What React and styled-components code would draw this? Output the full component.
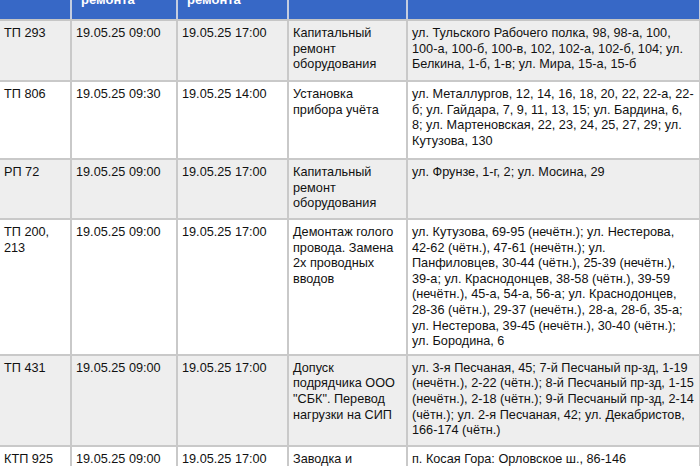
import styled, { createGlobalStyle } from "styled-components";

const GlobalStyle = createGlobalStyle`
  html, body {
    margin: 0;
    padding: 0;
    background: #ffffff;
  }
  body {
    font-family: "Liberation Sans", Arial, sans-serif;
    color: #111111;
  }
`;

const columns = [
  { title: "Объект", width: 71 },
  { title: "Дата и время начала ремонта", width: 106 },
  { title: "Дата и время окончания ремонта", width: 111 },
  { title: "Вид работ", width: 119 },
  { title: "Адреса", width: 293 },
];

// address lines are kept as they wrap in the published table
const rows = [
  {
    object: "ТП 293",
    start: "19.05.25 09:00",
    end: "19.05.25 17:00",
    work: "Капитальный ремонт оборудования",
    address: [
      "ул. Тульского Рабочего полка, 98, 98-а, 100,",
      "100-а, 100-б, 100-в, 102, 102-а, 102-б, 104; ул.",
      "Белкина, 1-б, 1-в; ул. Мира, 15-а, 15-б",
    ],
    height: 61,
  },
  {
    object: "ТП 806",
    start: "19.05.25 09:30",
    end: "19.05.25 14:00",
    work: "Установка прибора учёта",
    address: [
      "ул. Металлургов, 12, 14, 16, 18, 20, 22, 22-а, 22-",
      "б; ул. Гайдара, 7, 9, 11, 13, 15; ул. Бардина, 6,",
      "8; ул. Мартеновская, 22, 23, 24, 25, 27, 29; ул.",
      "Кутузова, 130",
    ],
    height: 78,
  },
  {
    object: "РП 72",
    start: "19.05.25 09:00",
    end: "19.05.25 17:00",
    work: "Капитальный ремонт оборудования",
    address: ["ул. Фрунзе, 1-г, 2; ул. Мосина, 29"],
    height: 60,
  },
  {
    object: "ТП 200, 213",
    start: "19.05.25 09:00",
    end: "19.05.25 17:00",
    work: "Демонтаж голого провода. Замена 2х проводных вводов",
    address: [
      "ул. Кутузова, 69-95 (нечётн.); ул. Нестерова,",
      "42-62 (чётн.), 47-61 (нечётн.); ул.",
      "Панфиловцев, 30-44 (чётн.), 25-39 (нечётн.),",
      "39-а; ул. Краснодонцев, 38-58 (чётн.), 39-59",
      "(нечётн.), 45-а, 54-а, 56-а; ул. Краснодонцев,",
      "28-36 (чётн.), 29-37 (нечётн.), 28-а, 28-б, 35-а;",
      "ул. Нестерова, 39-45 (нечётн.), 30-40 (чётн.);",
      "ул. Бородина, 6",
    ],
    height: 130,
  },
  {
    object: "ТП 431",
    start: "19.05.25 09:00",
    end: "19.05.25 17:00",
    work: 'Допуск подрядчика ООО "СБК". Перевод нагрузки на СИП',
    address: [
      "ул. 3-я Песчаная, 45; 7-й Песчаный пр-зд, 1-19",
      "(нечётн.), 2-22 (чётн.); 8-й Песчаный пр-зд, 1-15",
      "(нечётн.), 2-18 (чётн.); 9-й Песчаный пр-зд, 2-14",
      "(чётн.); ул. 2-я Песчаная, 42; ул. Декабристов,",
      "166-174 (чётн.)",
    ],
    height: 91,
  },
  {
    object: "КТП 925",
    start: "19.05.25 09:00",
    end: "19.05.25 17:00",
    work: "Заводка и подключение нового кабеля",
    address: ["п. Косая Гора: Орловское ш., 86-146"],
    height: 70,
  },
];

const Viewport = styled.div`
  width: 700px;
  height: 466px;
  overflow: hidden;
`;

const Table = styled.table`
  width: 700px;
  margin-top: -50px;
  border-collapse: collapse;
  table-layout: fixed;
  font-size: 12.7px;
  line-height: 15.6px;
`;

const HeadRow = styled.tr`
  height: 70px;
  background: #3768c6;
`;

const HeadCell = styled.th`
  padding: 0 6px 0 9px;
  vertical-align: middle;
  text-align: left;
  font-weight: bold;
  font-size: 13px;
  color: #ffffff;
  border-left: 2px solid #c4cde0;
  border-right: 2px solid #c4cde0;
  border-bottom: 2px solid #c6c6c6;

  &:first-child {
    border-left: none;
  }
`;

const Row = styled.tr`
  background: ${(props) => (props.$shaded ? "#eeeeee" : "#ffffff")};
`;

const Cell = styled.td`
  padding: 5px 4px 4px 4px;
  vertical-align: top;
  border: 2px solid #c9c9c9;
  border-top: none;
  overflow-wrap: break-word;

  &:first-child {
    border-left: none;
  }

  &:last-child {
    padding-right: 0;
  }
`;

const AddressLine = styled.span`
  display: block;
  white-space: nowrap;
`;

export default function App() {
  return (
    <Viewport>
      <GlobalStyle />
      <Table>
        <colgroup>
          {columns.map((col) => (
            <col key={col.title} style={{ width: col.width }} />
          ))}
        </colgroup>
        <thead>
          <HeadRow>
            {columns.map((col) => (
              <HeadCell key={col.title}>{col.title}</HeadCell>
            ))}
          </HeadRow>
        </thead>
        <tbody>
          {rows.map((row, i) => (
            <Row key={row.object} $shaded={i % 2 === 0} style={{ height: row.height }}>
              <Cell>{row.object}</Cell>
              <Cell>{row.start}</Cell>
              <Cell>{row.end}</Cell>
              <Cell>{row.work}</Cell>
              <Cell>
                {row.address.map((line) => (
                  <AddressLine key={line}>{line}</AddressLine>
                ))}
              </Cell>
            </Row>
          ))}
        </tbody>
      </Table>
    </Viewport>
  );
}
